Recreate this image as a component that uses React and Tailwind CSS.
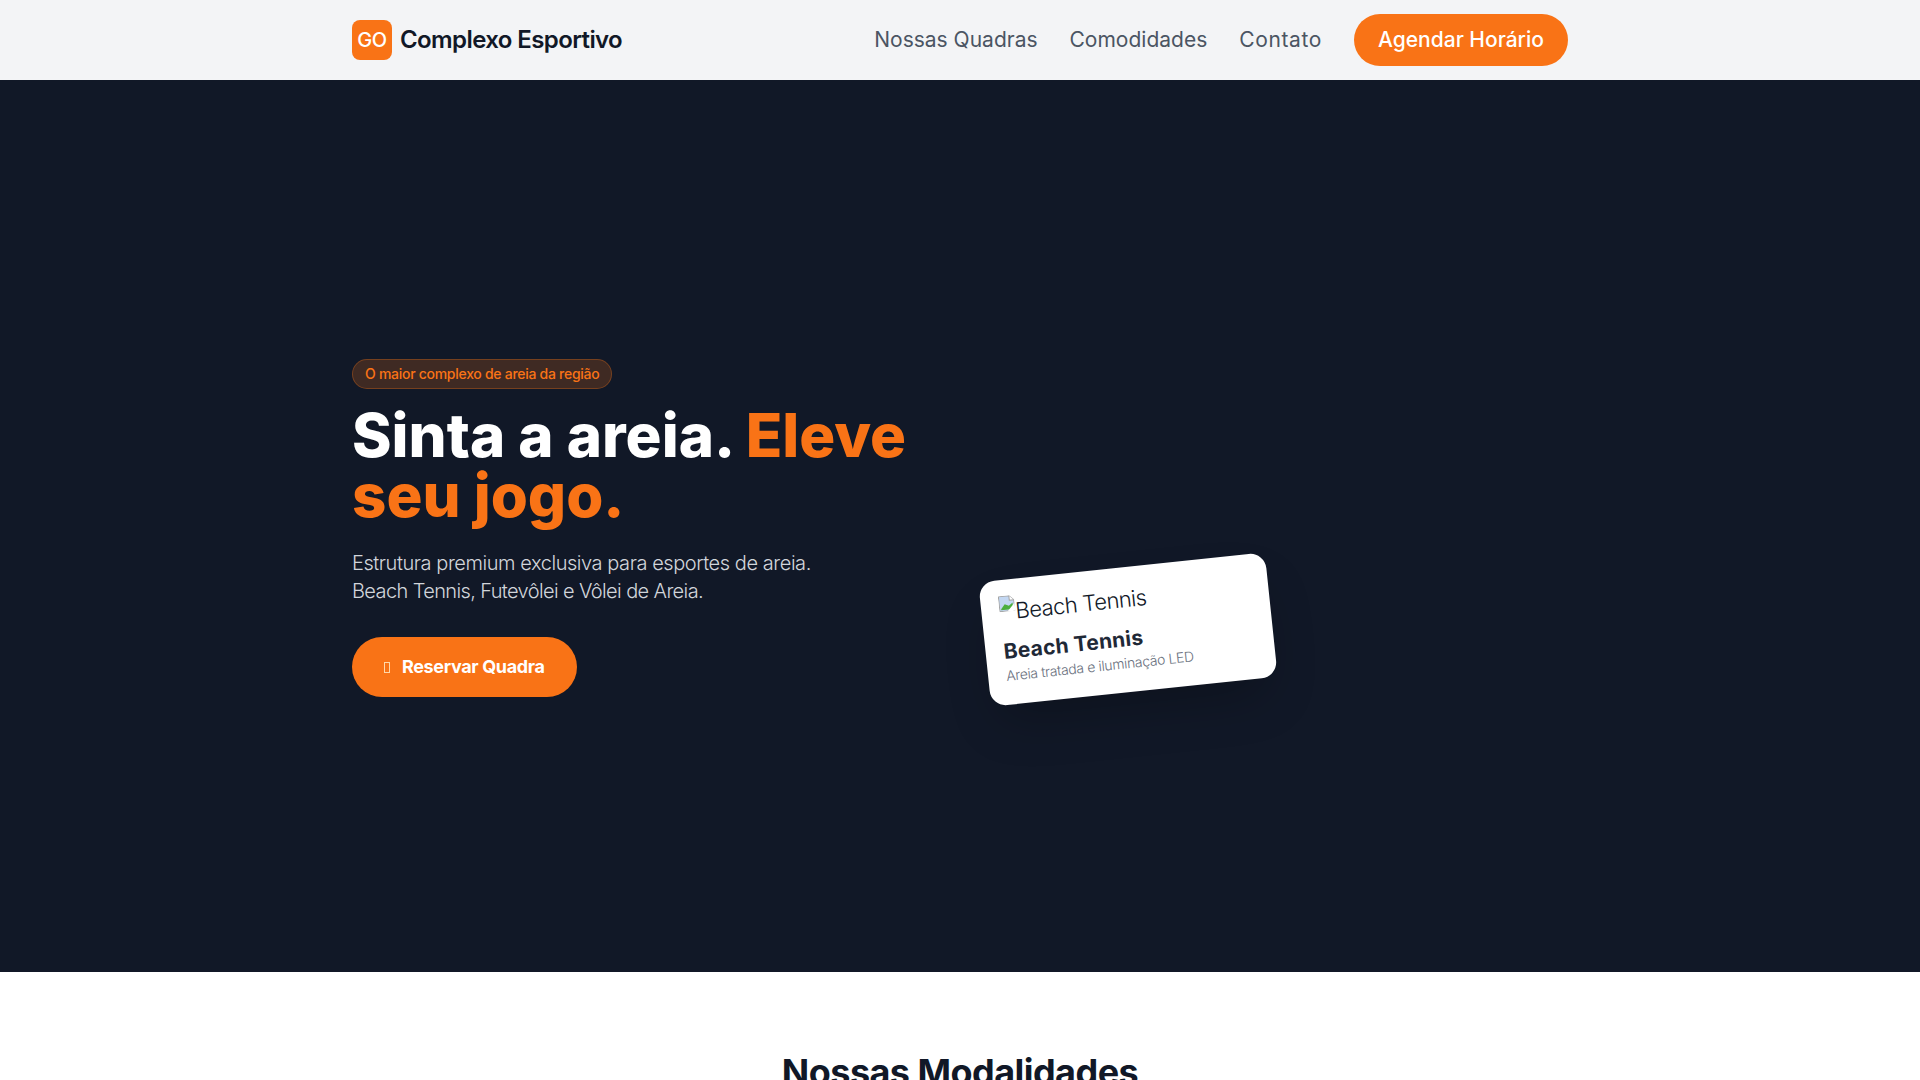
const BrokenImage = () => (
  <svg width="16" height="16" viewBox="0 0 16 16" className="shrink-0">
    <path d="M0.5 0.5H11L15.5 5V15.5H0.5Z" fill="#c3d7f2" stroke="#a3a3a3" />
    <path d="M11 0.5V5H15.5" fill="#fff" stroke="#a3a3a3" />
    <path d="M2 13L6 8.5L10 10.5L14 7.5V14H2Z" fill="#4caf3e" />
    <path d="M16 8L8 16H16Z" fill="#fff" />
  </svg>
)

const App = () => {
  return (
    <div className="min-h-screen bg-white font-['Inter',sans-serif]">
      <header className="h-20 bg-[#f3f4f6]">
        <div className="max-w-7xl h-full mx-auto px-8 flex items-center justify-between">
          <div className="flex items-center gap-2">
            <div className="w-10 h-10 rounded-lg bg-[#f97316] flex items-center justify-center text-white text-xl font-medium tracking-tight">
              GO
            </div>
            <span className="text-2xl font-semibold text-[#111827] tracking-[-0.025em]">Complexo Esportivo</span>
          </div>
          <nav className="flex items-center gap-8">
            <a className="text-[21px] text-[#4b5563]">Nossas Quadras</a>
            <a className="text-[21px] text-[#4b5563]">Comodidades</a>
            <a className="text-[21px] text-[#4b5563] tracking-[0.03em]">Contato</a>
            <button className="px-6 py-3 rounded-full bg-[#f97316] text-white text-[21px] font-medium leading-7">
              Agendar Horário
            </button>
          </nav>
        </div>
      </header>

      <section className="h-[892px] bg-[#111827]">
        <div className="max-w-7xl h-full mx-auto px-8 grid grid-cols-2 gap-12 items-center">
          <div className="mt-1">
            <span className="inline-block px-3 py-1 rounded-full border border-[#f97316]/30 bg-[#f97316]/20 text-[#f97316] text-sm font-medium tracking-[-0.02em]">
              O maior complexo de areia da região
            </span>
            <h1 className="mt-4 mb-6 text-6xl leading-none font-extrabold text-white">
              Sinta a areia. <span className="text-[#f97316]">Eleve seu jogo.</span>
            </h1>
            <p className="mb-8 text-xl font-light text-[#d1d5db] tracking-[-0.022em]">
              Estrutura premium exclusiva para esportes de areia.
              <br />
              <span className="tracking-[-0.031em]">Beach Tennis, Futevôlei e Vôlei de Areia.</span>
            </p>
            <button className="inline-flex items-center gap-3 h-[60px] px-8 rounded-full bg-[#f97316] text-white text-lg font-bold tracking-[-0.02em]">
              <span className="w-[6px] h-[11px] border border-orange-200" />
              Reservar Quadra
            </button>
          </div>

          <div className="mt-[206px]">
            <div className="w-[288px] -rotate-6 rounded-2xl bg-white pt-4 pl-[18px] pr-4 pb-[19px] shadow-2xl">
              <div className="flex items-start text-[22px] leading-8 font-light text-[#111827] tracking-[-0.025em]">
                <BrokenImage />
                <span>Beach Tennis</span>
              </div>
              <h3 className="mt-3 text-[21px] font-bold leading-6 text-[#1f2937] tracking-[0.01em]">Beach Tennis</h3>
              <p className="mt-[2px] text-sm font-light text-[#6b7280] tracking-[-0.024em]">Areia tratada e iluminação LED</p>
            </div>
          </div>
        </div>
      </section>

      <section className="py-20 bg-white">
        <h2 className="text-4xl font-bold text-[#111827] text-center tracking-[-0.015em]">Nossas Modalidades</h2>
      </section>
    </div>
  )
}

export default App
